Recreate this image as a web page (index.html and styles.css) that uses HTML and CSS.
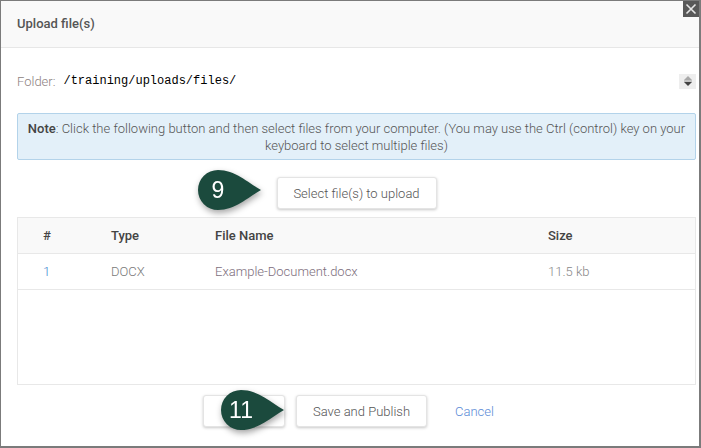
FILE: index.html
```html
<!DOCTYPE html>
<html>
<head>
<meta charset="utf-8">
<link rel="stylesheet" href="styles.css">
</head>
<body>
<div class="modal">
  <div class="header">
    <span class="title">Upload file(s)</span>
    <button class="close" aria-label="Close">
      <svg width="12" height="12" viewBox="0 0 12 12"><path d="M1.5 1.5 L10.5 10.5 M10.5 1.5 L1.5 10.5" stroke="#e6e6e6" stroke-width="1.6" fill="none"/></svg>
    </button>
  </div>
  <div class="content">
    <div class="folder-row">
      <span class="folder-label">Folder:</span>
      <span class="folder-path">/training/uploads/files/</span>
      <span class="spinner">
        <svg width="10" height="12" viewBox="0 0 10 12"><path d="M5 1 L9 5 L1 5 Z" fill="#a8a8a8"/><path d="M1 7 L9 7 L5 11 Z" fill="#444"/><rect x="1" y="5.6" width="8" height="0.8" fill="#888"/></svg>
      </span>
    </div>
    <div class="note"><b>Note</b>: Click the following button and then select files from your computer. (You may use the Ctrl (control) key on your keyboard to select multiple files)</div>
    <div class="select-row">
      <button class="btn btn-select">Select file(s) to upload</button>
    </div>
    <div class="table">
      <div class="thead">
        <span>#</span><span>Type</span><span>File Name</span><span>Size</span>
      </div>
      <div class="trow">
        <span class="num">1</span><span>DOCX</span><span class="fname">Example-Document.docx</span><span class="size">11.5 kb</span>
      </div>
    </div>
    <div class="footer">
      <button class="btn btn-blank"></button>
      <button class="btn btn-save">Save and Publish</button>
      <a class="cancel" href="#">Cancel</a>
    </div>
  </div>
  <div class="callout callout-9">
    <svg width="66" height="42" viewBox="0 0 66 42"><path d="M64 21 C50 13 38 1 21 1 A20 20 0 0 0 21 41 C38 41 50 29 64 21 Z" fill="#1b4a3d"/></svg>
    <span class="callout-num">9</span>
  </div>
  <div class="callout callout-11">
    <svg width="66" height="42" viewBox="0 0 66 42"><path d="M64 21 C50 13 38 1 21 1 A20 20 0 0 0 21 41 C38 41 50 29 64 21 Z" fill="#1b4a3d"/></svg>
    <span class="callout-num">11</span>
  </div>
</div>
</body>
</html>
```

FILE: styles.css
```css
* { box-sizing: border-box; }
html, body { margin: 0; padding: 0; background: #fff; }
body { font-family: Roboto, "Liberation Sans", Arial, sans-serif; }

.modal {
  position: relative;
  width: 701px;
  height: 448px;
  border: 1px solid #7b7b7b;
  border-right-width: 2px;
  border-bottom-width: 2px;
  background: #fff;
  overflow: hidden;
}

.header {
  height: 47px;
  background: #f9f9f9;
  border-bottom: 1px solid #e7e7e7;
  display: flex;
  align-items: center;
  padding-left: 16px;
}
.title {
  font-size: 13px;
  font-weight: 500;
  color: #555;
  margin-top: -2px;
}
.close {
  position: absolute;
  top: 0;
  right: 0;
  width: 16px;
  height: 16px;
  border: 0;
  padding: 0;
  background: #585858;
  display: flex;
  align-items: center;
  justify-content: center;
}

.content {
  padding: 0 3px 0 16px;
}

.folder-row {
  display: flex;
  align-items: center;
  height: 16px;
  margin-top: 25px;
}
.folder-label {
  font-size: 13px;
  font-weight: 300;
  color: #8d7f80;
  margin-right: 8px;
}
.folder-path {
  font-family: "Liberation Mono", "DejaVu Sans Mono", monospace;
  font-size: 12px;
  color: #000;
  flex: 1;
}
.spinner {
  width: 17px;
  height: 15px;
  background: #eeeeee;
  display: flex;
  align-items: center;
  justify-content: center;
}

.note {
  margin-top: 24px;
  height: 47px;
  background: #e3f0f9;
  border: 1px solid #b3d3ea;
  border-radius: 2px;
  text-align: center;
  font-size: 13px;
  font-weight: 300;
  line-height: 17px;
  color: #555;
  padding: 6px 6px 0;
}
.note b { font-weight: 500; color: #444; }

.select-row {
  display: flex;
  justify-content: center;
  margin-top: 17px;
}
.btn {
  font-family: Roboto, "Liberation Sans", Arial, sans-serif;
  font-size: 13px;
  font-weight: 300;
  color: #555;
  background: #fff;
  border: 1px solid #e4e4e4;
  border-radius: 3px;
  box-shadow: 0 1px 3px rgba(0,0,0,0.22);
  height: 32px;
  padding: 0;
  white-space: nowrap;
}
.btn-select { width: 160px; }

.table {
  margin-top: 8px;
  height: 168px;
  border: 1px solid #e8e8e8;
}
.thead, .trow {
  display: grid;
  grid-template-columns: 68px 104px 333px 1fr;
  padding-left: 25px;
  align-items: center;
  font-size: 13px;
}
.thead {
  height: 36px;
  background: #f9f9f9;
  border-bottom: 1px solid #e8e8e8;
  font-weight: 500;
  color: #444;
}
.trow {
  height: 36px;
  border-bottom: 1px solid #e8e8e8;
  font-weight: 300;
  color: #7a7a7a;
}
.trow .num { color: #3f86d0; }
.trow .fname { color: #7d6e7c; }
.trow .size { color: #888; }

.footer {
  display: flex;
  align-items: center;
  justify-content: center;
  margin-top: 10px;
  padding-right: 16px;
}
.btn-blank { width: 82px; margin-right: 11px; }
.btn-save { width: 131px; }
.cancel {
  font-size: 13px;
  font-weight: 300;
  color: #5b8bd6;
  text-decoration: none;
  margin-left: 28px;
}

.callout {
  position: absolute;
  width: 66px;
  height: 42px;
  filter: drop-shadow(1px 3px 3px rgba(0,0,0,0.35));
}
.callout svg { position: absolute; left: 0; top: 0; }
.callout-num {
  position: absolute;
  left: 0;
  top: 0;
  width: 42px;
  height: 42px;
  display: flex;
  align-items: center;
  justify-content: center;
  color: #fff;
  font-family: "Liberation Sans", Arial, sans-serif;
  font-size: 23px;
}
.callout-9 { left: 196px; top: 168px; }
.callout-11 { left: 219px; top: 388px; }
```
